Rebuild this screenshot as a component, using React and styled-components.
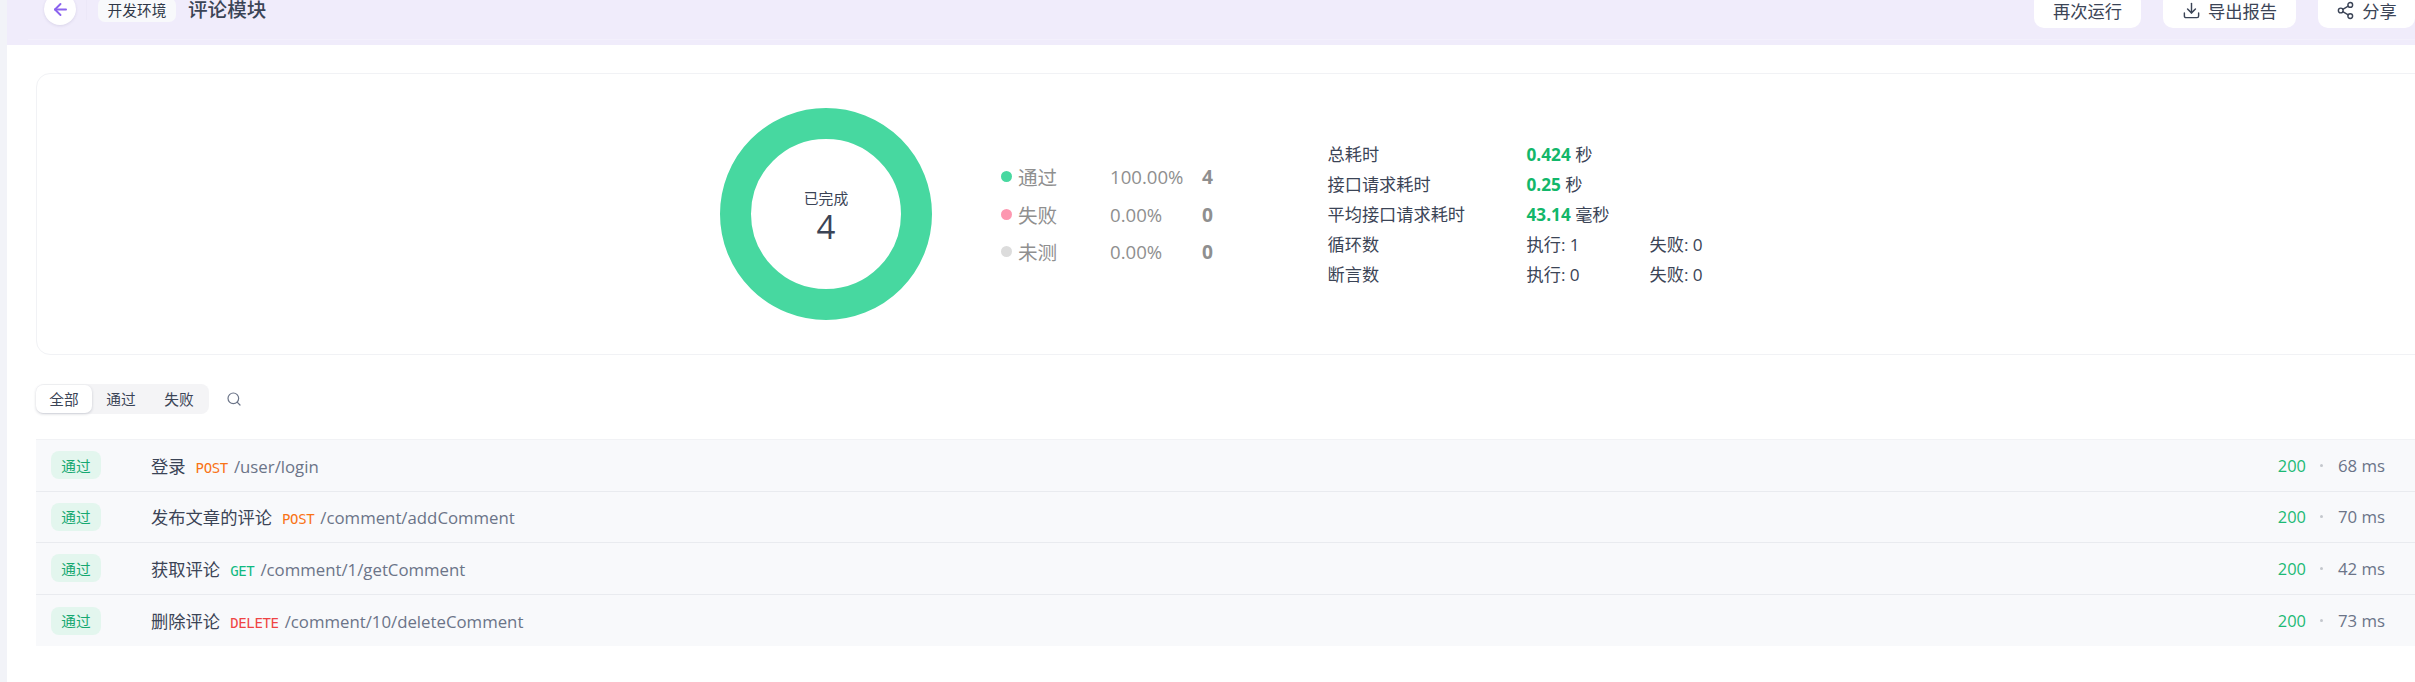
import React from 'react';
import styled, { createGlobalStyle } from 'styled-components';
import { ArrowLeft, Download, Search, Share2 } from 'lucide-react';

const GlobalStyle = createGlobalStyle`
    html, body {
        margin: 0;
        padding: 0;
        height: 100%;
        overflow: hidden;
        background: #f2f3f8;
    }
    body {
        font-family: "Open Sans", "Noto Sans CJK SC", sans-serif;
        color: #3b4456;
    }
`;

const legend = [
    { label: '通过', percent: '100.00%', count: 4, color: '#48d8a0' },
    { label: '失败', percent: '0.00%', count: 0, color: '#fd97b0' },
    { label: '未测', percent: '0.00%', count: 0, color: '#dcdcdc' },
];

const requests = [
    { name: '登录', method: 'POST', path: '/user/login', time: '68 ms' },
    { name: '发布文章的评论', method: 'POST', path: '/comment/addComment', time: '70 ms' },
    { name: '获取评论', method: 'GET', path: '/comment/1/getComment', time: '42 ms' },
    { name: '删除评论', method: 'DELETE', path: '/comment/10/deleteComment', time: '73 ms' },
];

const methodColors = { POST: '#f97316', GET: '#10b981', DELETE: '#ef4444' };

const App = () => {
    return (
        <>
            <GlobalStyle />
            <Page>
                <Header>
                    <HeaderBar>
                        <BackButton><ArrowLeft size={19} strokeWidth={2.4} /></BackButton>
                        <Divider />
                        <EnvTag>开发环境</EnvTag>
                        <Title>评论模块</Title>
                        <Actions>
                            <ActionButton $width={107}>再次运行</ActionButton>
                            <ActionButton $width={133}><Download size={19} strokeWidth={1.8} />导出报告</ActionButton>
                            <ActionButton $width={97}><Share2 size={19} strokeWidth={1.8} />分享</ActionButton>
                        </Actions>
                    </HeaderBar>
                </Header>
                <Main>
                    <Summary>
                        <Donut>
                            <svg width="212" height="212" viewBox="0 0 212 212">
                                <circle cx="106" cy="106" r="90.5" fill="none" stroke="#47d8a0" strokeWidth="31" />
                            </svg>
                            <DonutLabel>
                                <span>已完成</span>
                                <strong>4</strong>
                            </DonutLabel>
                        </Donut>
                        <Legend>
                            {legend.map((item) => (
                                <LegendRow key={item.label}>
                                    <LegendName>
                                        <Dot $color={item.color} />
                                        {item.label}
                                    </LegendName>
                                    <span>{item.percent}</span>
                                    <b>{item.count}</b>
                                </LegendRow>
                            ))}
                        </Legend>
                        <Stats>
                            <span>总耗时</span>
                            <StatWide><em>0.424</em> 秒</StatWide>
                            <span>接口请求耗时</span>
                            <StatWide><em>0.25</em> 秒</StatWide>
                            <span>平均接口请求耗时</span>
                            <StatWide><em>43.14</em> 毫秒</StatWide>
                            <span>循环数</span>
                            <span>执行: 1</span>
                            <span>失败: 0</span>
                            <span>断言数</span>
                            <span>执行: 0</span>
                            <span>失败: 0</span>
                        </Stats>
                    </Summary>
                    <Filters>
                        <Tabs>
                            <Tab $active>全部</Tab>
                            <Tab>通过</Tab>
                            <Tab>失败</Tab>
                        </Tabs>
                        <SearchIcon><Search size={16} strokeWidth={1.8} /></SearchIcon>
                    </Filters>
                    <List>
                        {requests.map((req) => (
                            <Row key={req.name}>
                                <PassTag>通过</PassTag>
                                <Line>
                                    <Name>{req.name}</Name>
                                    <Method $color={methodColors[req.method]}>{req.method}</Method>
                                    <Path>{req.path}</Path>
                                </Line>
                                <Status>200</Status>
                                <Sep />
                                <Time>{req.time}</Time>
                            </Row>
                        ))}
                    </List>
                </Main>
            </Page>
        </>
    )
}

export default App;


const Page = styled.div `
    margin-left: 7px;
    height: 682px;
    background: #fff;
    overflow: hidden;
`;

const Header = styled.header `
    height: 45px;
    background: #f0ecfb;
    overflow: hidden;
`;

const HeaderBar = styled.div `
    display: flex;
    align-items: center;
    height: 47px;
    margin: -8px 0 0 21px;
    padding: 0 0 0 16px;
    border-bottom: 1px solid #f3f0fc;
    box-sizing: content-box;
`;

const BackButton = styled.div `
    display: flex;
    align-items: center;
    justify-content: center;
    width: 32px;
    height: 32px;
    margin-top: -13px;
    border-radius: 50%;
    background: #fff;
    color: #8b63ee;
    box-shadow: 0 1px 3px rgba(60, 50, 110, 0.12);
`;

const Divider = styled.div `
    width: 1px;
    height: 22px;
    margin: -13px 11px 0 10px;
    background: #ece8f8;
`;

const EnvTag = styled.div `
    display: flex;
    align-items: center;
    justify-content: center;
    width: 78px;
    height: 24px;
    margin-top: -11px;
    border-radius: 7px;
    background: #f8f9fb;
    color: #2f3747;
    font-size: 14.7px;
    line-height: 18px;
`;

const Title = styled.h1 `
    margin: -11px 0 0 12px;
    font-size: 19.6px;
    font-weight: 500;
    line-height: 20px;
    color: #3b4456;
`;

const Actions = styled.div `
    display: flex;
    align-items: center;
    gap: 22px;
    margin-left: auto;
    margin-top: -11px;
`;

const ActionButton = styled.div `
    display: flex;
    align-items: center;
    justify-content: center;
    gap: 7px;
    width: ${(props) => props.$width}px;
    height: 36px;
    border-radius: 10px;
    background: #fff;
    color: #3b4456;
    font-size: 17.3px;
`;

const Main = styled.main `
    padding: 28px 0 0 29px;
`;

const Summary = styled.section `
    display: flex;
    height: 282px;
    margin-right: -14px;
    padding: 34px 0 0 683px;
    border: 1px solid #f1f2f5;
    border-radius: 14px;
    box-sizing: border-box;
`;

const Donut = styled.div `
    position: relative;
    width: 212px;
    height: 212px;
`;

const DonutLabel = styled.div `
    position: absolute;
    inset: 6px 0 0;
    display: flex;
    flex-direction: column;
    align-items: center;
    justify-content: center;
    color: #3b4456;

    span {
        font-size: 14.8px;
        line-height: 20px;
    }

    strong {
        font-size: 33px;
        font-weight: 400;
        line-height: 38px;
    }
`;

const Legend = styled.div `
    display: flex;
    flex-direction: column;
    gap: 0;
    margin: 50px 0 0 69px;
    width: 326.5px;
`;

const LegendRow = styled.div `
    display: grid;
    grid-template-columns: 109px 92px auto;
    align-items: center;
    height: 37.5px;
    color: #8f8f8f;
    font-size: 19.2px;

    span {
        font-size: 18.6px;
    }

    b {
        font-size: 19.2px;
    }
`;

const LegendName = styled.div `
    display: flex;
    align-items: center;
    gap: 6px;
    font-size: 19.6px;
`;

const Dot = styled.i `
    width: 11px;
    height: 11px;
    border-radius: 50%;
    background: ${(props) => props.$color};
`;

const Stats = styled.div `
    display: grid;
    grid-template-columns: 199px 123px auto;
    grid-auto-rows: 30px;
    align-items: center;
    align-self: flex-start;
    margin-top: 30.5px;
    color: #3b4456;
    font-size: 17.2px;

    em {
        color: #12b76a;
        font-style: normal;
        font-weight: 700;
    }
`;

const StatWide = styled.span `
    grid-column: span 2;
`;

const Filters = styled.div `
    display: flex;
    align-items: center;
    margin-top: 29px;
`;

const Tabs = styled.div `
    display: flex;
    align-items: center;
    width: 173px;
    height: 30px;
    border-radius: 8px;
    background: #f4f4f6;
    box-sizing: border-box;
`;

const Tab = styled.div `
    display: flex;
    align-items: center;
    justify-content: center;
    width: ${(props) => (props.$active ? '56px' : '58px')};
    height: 28px;
    padding-bottom: 2px;
    border-radius: 7px;
    font-size: 14.7px;
    color: #3b4456;
    background: ${(props) => (props.$active ? '#fff' : 'transparent')};
    box-shadow: ${(props) => (props.$active ? '0 1px 3px rgba(30, 40, 70, 0.2)' : 'none')};
    box-sizing: border-box;
`;

const SearchIcon = styled.div `
    display: flex;
    margin-left: 17px;
    color: #6b7488;
`;

const List = styled.div `
    margin-top: 25px;
    border-top: 1px solid #f1f2f5;
`;

const Row = styled.div `
    display: flex;
    align-items: center;
    height: 51.6px;
    padding: 0 30px 0 15px;
    background: #f8f9fb;
    border-bottom: 1px solid #e9ebef;
    box-sizing: border-box;

    &:last-child {
        border-bottom: none;
    }
`;

const PassTag = styled.div `
    display: flex;
    align-items: center;
    justify-content: center;
    width: 50px;
    height: 28px;
    margin-right: 50px;
    border-radius: 8px;
    background: #e3f6ee;
    color: #16a871;
    font-size: 14.7px;
`;

const Line = styled.div `
    display: flex;
    align-items: baseline;
    gap: 10px;
`;

const Name = styled.span `
    font-size: 17.3px;
    color: #3b4456;
`;

const Method = styled.span `
    margin-right: -4px;
    font-family: "DejaVu Sans Mono", "Liberation Mono", monospace;
    font-size: 14px;
    letter-spacing: -0.35px;
    color: ${(props) => props.$color};
`;

const Path = styled.span `
    font-size: 16.8px;
    color: #6b7488;
`;

const Status = styled.span `
    margin-left: auto;
    font-size: 16.4px;
    color: #1cb975;
`;

const Sep = styled.i `
    width: 3px;
    height: 3px;
    margin: 0 15px 0 14px;
    border-radius: 50%;
    background: #c4c7cd;
`;

const Time = styled.span `
    font-size: 16.8px;
    color: #6b7488;
`;
